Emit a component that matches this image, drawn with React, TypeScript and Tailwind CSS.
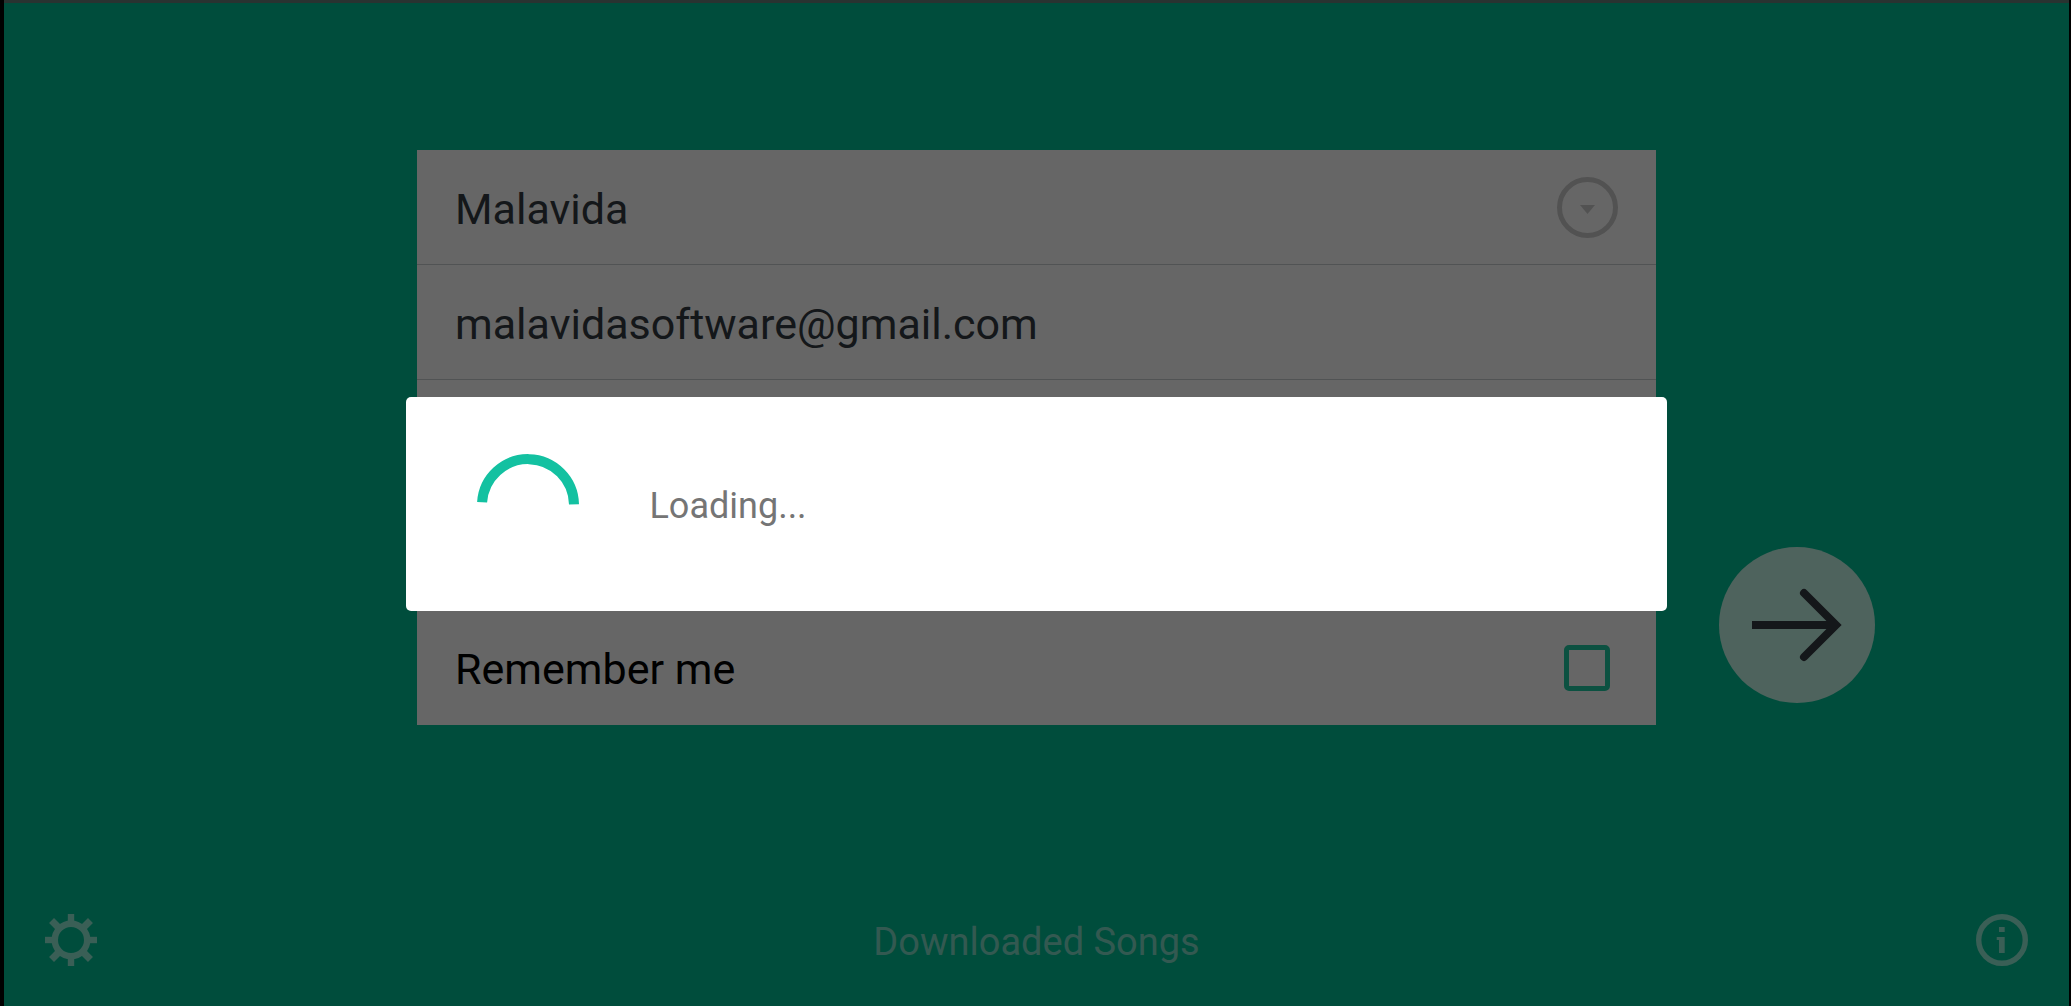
import { FormEvent, useState } from 'react';

function GearIcon() {
  return (
    <svg viewBox="-26 -26 52 52" className="size-[52px]" fill="none" stroke="currentColor" aria-hidden="true">
      <circle r="16.2" strokeWidth="6.4" />
      {[0, 90, 180, 270].map((angle) => (
        <path key={angle} d="M0 -17V-26" strokeWidth="6.4" transform={`rotate(${angle})`} />
      ))}
      {[45, 135, 225, 315].map((angle) => (
        <path key={angle} d="M0 -17V-27.5" strokeWidth="7" transform={`rotate(${angle})`} />
      ))}
    </svg>
  );
}

function InfoIcon() {
  return (
    <svg viewBox="-26 -26 52 52" className="size-[52px]" aria-hidden="true">
      <circle r="23.3" fill="none" stroke="currentColor" strokeWidth="5.4" />
      <path d="M-3 -13H2.7V-8H-3ZM-5.3 -3H2.7V13H-3V0H-5.3Z" fill="currentColor" />
    </svg>
  );
}

function ArrowIcon() {
  return (
    <svg viewBox="0 0 156 156" className="size-full" fill="none" stroke="currentColor" strokeWidth="8" aria-hidden="true">
      <path d="M33 78H115" />
      <path d="M85 46L117 78L85 110" strokeLinecap="round" />
    </svg>
  );
}

function LoadingDialog() {
  return (
    <div className="fixed inset-0 flex items-center justify-center bg-black/60 pt-0.5 pl-0.5">
      <div role="dialog" aria-modal="true" className="flex h-[214px] w-[60.9%] items-center gap-[70px] rounded-[5px] bg-white px-[71px]">
        <svg viewBox="-51 -51 102 102" className="size-[102px]" fill="none" stroke="#13c1a1" strokeWidth="10" aria-hidden="true">
          <path d="M-45.9 -1.8A46 46 0 0 1 46 0.3" />
        </svg>
        <p role="status" className="pt-1 text-[36px] leading-[42px] text-[#757575]">Loading...</p>
      </div>
    </div>
  );
}

const rowClass = 'flex h-[115px] items-center border-b border-[#cbcfd1] pl-[38px] pr-[38px]';
const inputClass = 'min-w-0 flex-1 bg-transparent pt-1 text-[43px] leading-[52px] text-[#343b41] outline-none';

export default function App() {
  const [name, setName] = useState('Malavida');
  const [email, setEmail] = useState('malavidasoftware@gmail.com');
  const [password, setPassword] = useState('');
  const [confirm, setConfirm] = useState('');
  const [remember, setRemember] = useState(false);
  const [loading, setLoading] = useState(true);

  function onSubmit(e: FormEvent) {
    e.preventDefault();
    setLoading(true);
  }

  return (
    <div className="flex min-h-screen flex-col border-r-2 border-l-4 border-black bg-[#00c096] font-[Roboto,sans-serif]">
      <div className="h-[3px] bg-[#68807b]" />
      <form onSubmit={onSubmit} className="mt-[147px] grid grid-cols-[1fr_3fr_1fr]">
        <div className="col-start-2 bg-white">
          <div className={rowClass}>
            <input className={inputClass} aria-label="Name" value={name} onChange={(e) => setName(e.target.value)} />
            <button type="button" aria-label="Show accounts" className="flex size-[61px] items-center justify-center rounded-full border-[5px] border-[#cdcdcd] text-[#cdcdcd]">
              <svg viewBox="0 0 15 9" className="mt-1 h-[9px] w-[15px]" fill="currentColor" aria-hidden="true">
                <path d="M0 0H15L7.5 9Z" />
              </svg>
            </button>
          </div>
          <div className={rowClass}>
            <input className={inputClass} type="text" inputMode="email" aria-label="Email" value={email} onChange={(e) => setEmail(e.target.value)} />
          </div>
          <div className={rowClass}>
            <input className={inputClass} type="password" aria-label="Password" value={password} onChange={(e) => setPassword(e.target.value)} />
          </div>
          <div className={rowClass}>
            <input className={inputClass} type="password" aria-label="Confirm password" value={confirm} onChange={(e) => setConfirm(e.target.value)} />
          </div>
          <div className="flex h-[115px] items-center justify-between pl-[38px] pr-[46px]">
            <label htmlFor="remember" className="pt-0.5 text-[43px] leading-[52px] text-black">Remember me</label>
            <input
              id="remember"
              type="checkbox"
              className="size-[46px] appearance-none rounded-[5px] border-[5px] border-[#20cba4] checked:bg-[#20cba4]"
              checked={remember}
              onChange={(e) => setRemember(e.target.checked)}
            />
          </div>
        </div>
        <button type="submit" aria-label="Continue" className="mb-[22px] ml-[63px] size-[156px] self-end rounded-full bg-[#c3f7e8] text-[#343b41]">
          <ArrowIcon />
        </button>
      </form>

      <footer className="mt-auto flex items-center justify-between px-[41px] pb-10 text-[#91edd7]">
        <button type="button" aria-label="Settings"><GearIcon /></button>
        <a href="#downloads" className="pt-1 text-[38px] leading-[44px] text-[#80dfcb]">Downloaded Songs</a>
        <button type="button" aria-label="About"><InfoIcon /></button>
      </footer>

      {loading && <LoadingDialog />}
    </div>
  );
}
